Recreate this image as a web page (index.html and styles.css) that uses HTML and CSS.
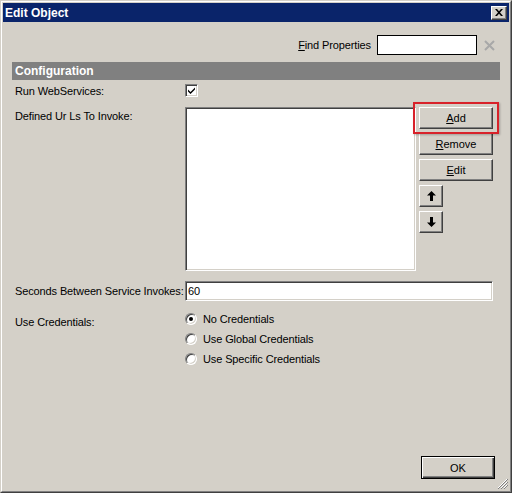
FILE: index.html
```html
<!DOCTYPE html>
<html>
<head>
<meta charset="utf-8">
<link rel="stylesheet" href="styles.css">
</head>
<body>
<div class="win">
  <div class="inner">
    <div class="titlebar">
      <span class="title">Edit Object</span>
      <span class="close">
        <svg width="8" height="7" viewBox="0 0 8 7"><path d="M0 0h2l2 2.2L6 0h2L5 3.5 8 7H6L4 4.8 2 7H0l3-3.5z" fill="#000"/></svg>
      </span>
    </div>
    <div class="content">
      <div class="findrow">
        <span class="findlabel"><u>F</u>ind Properties</span>
        <span class="findbox"></span>
        <span class="findx">
          <svg width="11" height="11" viewBox="0 0 11 11"><path d="M1 1L10 10M10 1L1 10" stroke="#a8a8a8" stroke-width="2"/></svg>
        </span>
      </div>
      <div class="section">Configuration</div>
      <div class="form">
        <div class="row r-run">
          <span class="lbl">Run WebServices:</span>
          <span class="check">
            <svg width="9" height="9" viewBox="0 0 9 9"><path d="M1 3.5l2.5 2.5L8 1.5v2L3.5 8 1 5.5z" fill="#000"/></svg>
          </span>
        </div>
        <div class="row r-urls">
          <span class="lbl lbl-top">Defined Ur Ls To Invoke:</span>
          <div class="listbox"></div>
          <div class="btncol">
            <button class="btn wide"><u>A</u>dd</button>
            <button class="btn wide"><u>R</u>emove</button>
            <button class="btn wide"><u>E</u>dit</button>
            <button class="btn arrow">
              <svg width="9" height="10" viewBox="0 0 9 10"><path d="M4.5 0L9 4.5H6V10H3V4.5H0z" fill="#000"/></svg>
            </button>
            <button class="btn arrow">
              <svg width="9" height="10" viewBox="0 0 9 10"><path d="M4.5 10L9 5.5H6V0H3V5.5H0z" fill="#000"/></svg>
            </button>
            <span class="highlight"></span>
          </div>
        </div>
        <div class="row r-secs">
          <span class="lbl">Seconds Between Service Invokes:</span>
          <span class="textbox">60</span>
        </div>
        <div class="row r-creds">
          <span class="lbl lbl-top">Use Credentials:</span>
          <div class="radios">
            <div class="radio-row"><span class="radio on"></span><span>No Credentials</span></div>
            <div class="radio-row"><span class="radio"></span><span>Use Global Credentials</span></div>
            <div class="radio-row"><span class="radio"></span><span>Use Specific Credentials</span></div>
          </div>
        </div>
      </div>
      <div class="spacer"></div>
      <div class="footer">
        <button class="btn ok">OK</button>
      </div>
      <span class="grip">
        <svg width="11" height="11" viewBox="0 0 11 11">
          <path d="M10 1L1 10M10 4L4 10M10 7L7 10" stroke="#fff" stroke-width="1"/>
          <path d="M11 1L1 11M11 4L4 11M11 7L7 11" stroke="#808080" stroke-width="1"/>
        </svg>
      </span>
    </div>
  </div>
</div>
</body>
</html>
```
FILE: styles.css
```css
html, body {
  margin: 0;
  padding: 0;
  background: #d4d0c8;
}
body {
  font-family: "Liberation Sans", Arial, sans-serif;
  font-size: 11px;
  letter-spacing: -0.12px;
  color: #000;
}
.win {
  width: 512px;
  height: 493px;
  box-sizing: border-box;
  border-top: 1px solid #d4d0c8;
  border-left: 1px solid #d4d0c8;
  border-right: 1px solid #404040;
  border-bottom: 1px solid #404040;
}
.inner {
  height: 100%;
  box-sizing: border-box;
  border-top: 1px solid #fff;
  border-left: 1px solid #fff;
  border-right: 1px solid #808080;
  border-bottom: 1px solid #808080;
  padding: 1px;
  display: flex;
  flex-direction: column;
}
.titlebar {
  height: 19px;
  background: #0a246a;
  display: flex;
  align-items: center;
  justify-content: space-between;
  padding: 0 2px 0 2px;
  flex: none;
}
.title {
  color: #fff;
  font-weight: bold;
  font-size: 12px;
  letter-spacing: 0;
}
.close {
  width: 16px;
  height: 14px;
  box-sizing: border-box;
  background: #d4d0c8;
  border-top: 1px solid #fff;
  border-left: 1px solid #fff;
  border-right: 1px solid #404040;
  border-bottom: 1px solid #404040;
  box-shadow: inset -1px -1px 0 #808080;
  display: flex;
  align-items: center;
  justify-content: center;
}
.content {
  flex: 1;
  position: relative;
  display: flex;
  flex-direction: column;
}
.findrow {
  display: flex;
  justify-content: flex-end;
  align-items: center;
  margin-top: 13px;
  padding-right: 14px;
  height: 20px;
}
.findlabel {
  margin-right: 6px;
}
.findbox {
  width: 100px;
  height: 20px;
  box-sizing: border-box;
  border: 1px solid #000;
  background: #fff;
}
.findx {
  margin-left: 7px;
  width: 11px;
  height: 11px;
  display: flex;
}
.section {
  margin: 7px 9px 0 9px;
  height: 18px;
  background: #808080;
  color: #fff;
  font-weight: bold;
  font-size: 12px;
  letter-spacing: 0;
  line-height: 18px;
  padding-left: 3px;
}
.form {
  padding-left: 12px;
}
.row {
  display: flex;
}
.lbl {
  width: 170px;
  flex: none;
  white-space: nowrap;
}
.r-run {
  margin-top: 4px;
  align-items: center;
  height: 13px;
}
.check {
  width: 13px;
  height: 13px;
  box-sizing: border-box;
  background: #fff;
  border-top: 1px solid #808080;
  border-left: 1px solid #808080;
  border-right: 1px solid #fff;
  border-bottom: 1px solid #fff;
  box-shadow: inset 1px 1px 0 #404040, inset -1px -1px 0 #d4d0c8;
  display: flex;
  align-items: center;
  justify-content: center;
}
.r-urls {
  margin-top: 10px;
}
.lbl-top {
  padding-top: 3px;
}
.listbox {
  width: 231px;
  height: 164px;
  box-sizing: border-box;
  background: #fff;
  border-top: 1px solid #808080;
  border-left: 1px solid #808080;
  border-right: 1px solid #fff;
  border-bottom: 1px solid #fff;
  box-shadow: inset 1px 1px 0 #404040, inset -1px -1px 0 #d4d0c8;
}
.btncol {
  margin-left: 3px;
  display: flex;
  flex-direction: column;
  align-items: flex-start;
  gap: 4px;
  position: relative;
}
.btn {
  font-family: "Liberation Sans", Arial, sans-serif;
  font-size: 11px;
  color: #000;
  background: #d4d0c8;
  box-sizing: border-box;
  border-top: 1px solid #fff;
  border-left: 1px solid #fff;
  border-right: 1px solid #404040;
  border-bottom: 1px solid #404040;
  box-shadow: inset -1px -1px 0 #808080;
  padding: 0;
  margin: 0;
  display: flex;
  align-items: center;
  justify-content: center;
}
.wide {
  width: 74px;
  height: 22px;
}
.arrow {
  width: 24px;
  height: 22px;
}
.highlight {
  position: absolute;
  left: -6px;
  top: -5px;
  width: 86px;
  height: 32px;
  box-sizing: border-box;
  border: 2px solid #d8222a;
  box-shadow: 1px 1px 2px rgba(0,0,0,0.25);
}
.r-secs {
  margin-top: 10px;
  align-items: center;
}
.textbox {
  width: 308px;
  height: 20px;
  box-sizing: border-box;
  background: #fff;
  border-top: 1px solid #808080;
  border-left: 1px solid #808080;
  border-right: 1px solid #fff;
  border-bottom: 1px solid #fff;
  box-shadow: inset 1px 1px 0 #404040, inset -1px -1px 0 #d4d0c8;
  padding-left: 2px;
  line-height: 18px;
}
.r-creds {
  margin-top: 12px;
}
.radios {
  display: flex;
  flex-direction: column;
  gap: 8px;
}
.radio-row {
  display: flex;
  align-items: center;
  height: 12px;
}
.radio {
  width: 12px;
  height: 12px;
  box-sizing: border-box;
  border-radius: 50%;
  background: #fff;
  border: 1px solid;
  border-color: #808080 #fff #fff #808080;
  box-shadow: inset 1px 1px 0 #404040, inset -1px -1px 0 #d4d0c8;
  margin-right: 6px;
  position: relative;
}
.radio.on::after {
  content: "";
  position: absolute;
  left: 3px;
  top: 3px;
  width: 4px;
  height: 4px;
  border-radius: 50%;
  background: #000;
}
.spacer {
  flex: 1;
}
.footer {
  display: flex;
  justify-content: flex-end;
  padding-right: 14px;
  margin-bottom: 11px;
}
.ok {
  width: 74px;
  height: 23px;
  border: 1px solid #000;
  box-shadow: inset 1px 1px 0 #fff, inset -1px -1px 0 #404040, inset -2px -2px 0 #808080;
}
.grip {
  position: absolute;
  right: 1px;
  bottom: 1px;
  width: 11px;
  height: 11px;
  display: flex;
}
```
